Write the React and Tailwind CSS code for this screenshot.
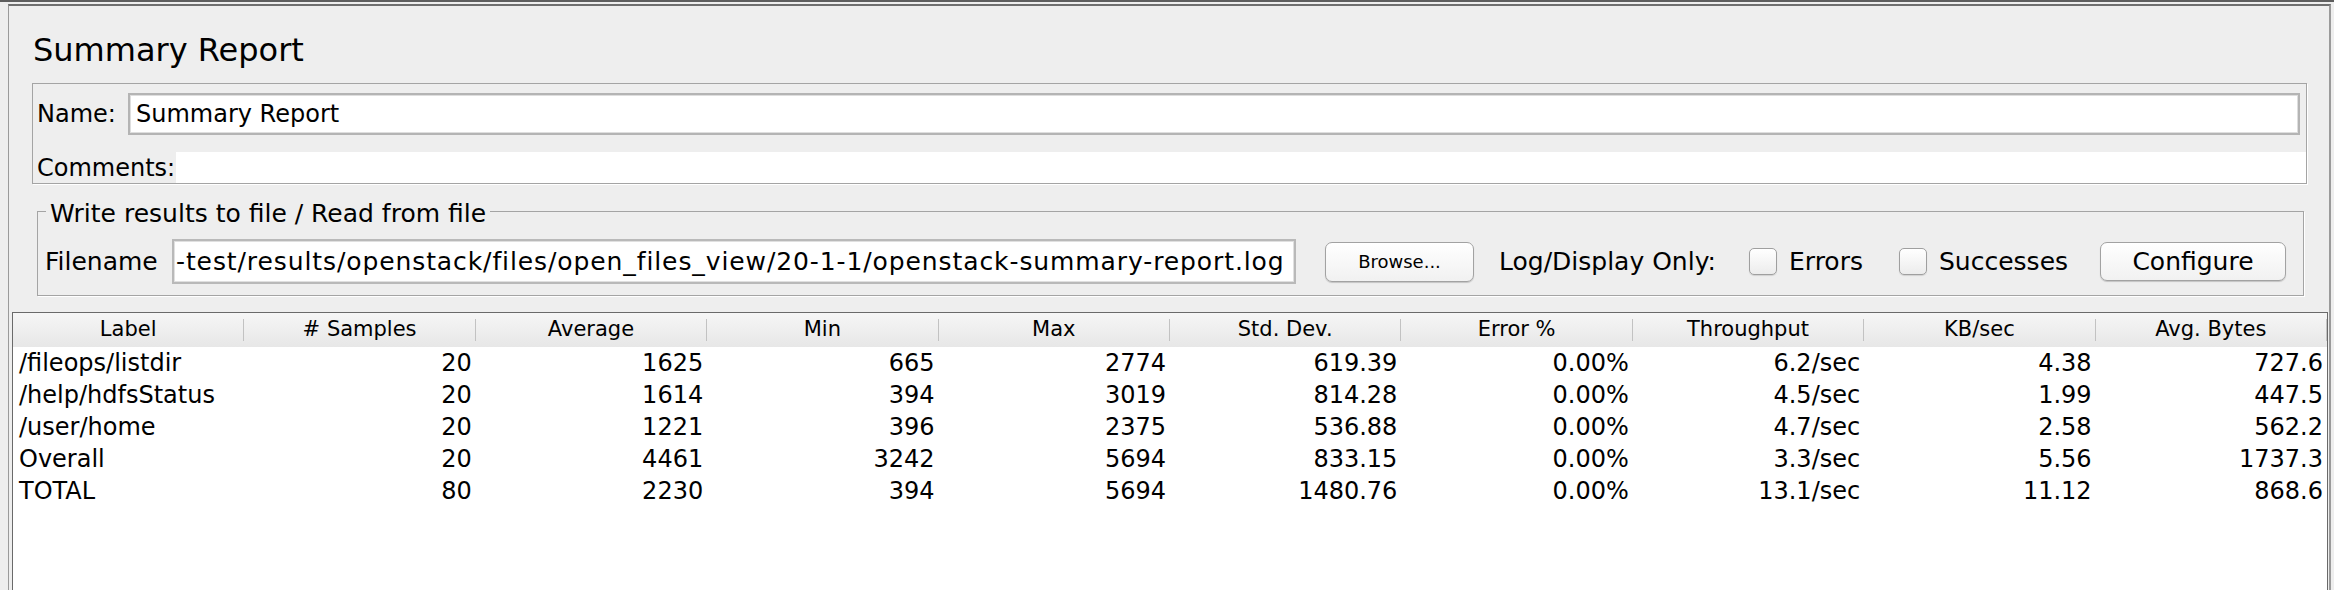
import React from 'react';

const headers = ['Label', '# Samples', 'Average', 'Min', 'Max', 'Std. Dev.', 'Error %', 'Throughput', 'KB/sec', 'Avg. Bytes'];

const rows = [
  ['/fileops/listdir', '20', '1625', '665', '2774', '619.39', '0.00%', '6.2/sec', '4.38', '727.6'],
  ['/help/hdfsStatus', '20', '1614', '394', '3019', '814.28', '0.00%', '4.5/sec', '1.99', '447.5'],
  ['/user/home', '20', '1221', '396', '2375', '536.88', '0.00%', '4.7/sec', '2.58', '562.2'],
  ['Overall', '20', '4461', '3242', '5694', '833.15', '0.00%', '3.3/sec', '5.56', '1737.3'],
  ['TOTAL', '80', '2230', '394', '5694', '1480.76', '0.00%', '13.1/sec', '11.12', '868.6'],
];

const AquaButton = ({ children, className = '' }) => (
  <button
    className={`flex items-center justify-center rounded-[7px] border border-[#a2a2a2] bg-linear-to-b from-white to-[#f1f1f1] shadow-[0_1px_1px_rgba(0,0,0,0.18)] text-black ${className}`}
  >
    {children}
  </button>
);

const Checkbox = () => (
  <span className="block h-[27px] w-[28px] rounded-[5px] border border-[#9f9f9f] bg-linear-to-b from-white to-[#ececec] shadow-[0_1px_1px_rgba(0,0,0,0.12)]" />
);

export default function App() {
  return (
    <div className="flex h-[590px] w-[2334px] flex-col overflow-hidden bg-[#eeeeee] text-black font-['DejaVu_Sans',sans-serif]">
      {/* window top edge */}
      <div className="h-[2px] bg-[#5e5e5e]" />
      <div className="h-[2px]" />

      <div className="ml-[8px] mr-[3px] flex flex-1 flex-col border-t-2 border-l border-r-2 border-t-[#6f6f6f] border-l-[#9a9a9a] border-r-[#9a9a9a]">
        {/* title */}
        <div className="mt-[25px] pl-[24px] text-[32px] leading-[38px]">Summary Report</div>

        {/* name / comments */}
        <div className="ml-[23px] mr-[22px] mt-[14px] flex flex-col border border-[#a4a4a4] shadow-[1px_1px_0_#ffffff]">
          <div className="flex items-center pt-[9px] pr-[6px]">
            <span className="w-[95px] pl-[4px] text-[24px] leading-[28px]">Name:</span>
            <div className="flex h-[42px] flex-1 items-center border-2 border-[#b4b4b4] bg-white pl-[6px] text-[24px] shadow-[inset_0_0_0_1px_#dedede]">
              Summary Report
            </div>
          </div>
          <div className="mt-[17px] flex h-[31px] items-center">
            <span className="w-[143px] pl-[4px] text-[24px] leading-[28px]">Comments:</span>
            <div className="h-full flex-1 bg-white" />
          </div>
        </div>

        {/* write results */}
        <fieldset className="ml-[28px] mr-[25px] mt-[10px] border border-[#a4a4a4] shadow-[1px_1px_0_#ffffff]">
          <legend className="ml-[8px] px-[4px] pt-[6px] text-[25px] leading-[28px]">Write results to file / Read from file</legend>
          <div className="flex h-[67px] items-center text-[25px]">
            <span className="w-[134px] pl-[7px]">Filename</span>
            <div className="flex h-[45px] w-[1124px] items-center overflow-hidden whitespace-nowrap border-2 border-[#b9b9b9] bg-white pl-[2px] text-[25px] tracking-[0.9px] shadow-[inset_0_0_0_1px_#e0e0e0]">
              -test/results/openstack/files/open_files_view/20-1-1/openstack-summary-report.log
            </div>
            <AquaButton className="ml-[29px] h-[40px] w-[149px] text-[18px]">Browse...</AquaButton>
            <span className="ml-[25px] w-[250px] whitespace-nowrap">Log/Display Only:</span>
            <Checkbox />
            <span className="ml-[12px] w-[110px]">Errors</span>
            <Checkbox />
            <span className="ml-[12px] w-[161px]">Successes</span>
            <AquaButton className="h-[39px] w-[186px] text-[25px]">Configure</AquaButton>
          </div>
        </fieldset>

        {/* results table */}
        <div className="ml-[3px] mr-[1px] mt-[16px] flex flex-1 flex-col border border-b-0 border-[#6a6a6a] bg-white">
          <div className="grid grid-cols-10 bg-linear-to-b from-[#f6f6f6] to-[#e7e7e7] text-[21px]">
            {headers.map((h) => (
              <div key={h} className="flex h-[34px] items-center">
                <span className="flex-1 text-center">{h}</span>
                <span className="h-[22px] w-px bg-[#c2c2c2]" />
              </div>
            ))}
          </div>
          {rows.map((r) => (
            <div key={r[0]} className="grid h-[32px] grid-cols-10 items-center text-[24px] leading-[32px]">
              {r.map((c, i) => (
                <div key={i} className={i === 0 ? 'pl-[6px] whitespace-nowrap' : 'pr-[4px] text-right'}>
                  {c}
                </div>
              ))}
            </div>
          ))}
        </div>
      </div>
    </div>
  );
}
